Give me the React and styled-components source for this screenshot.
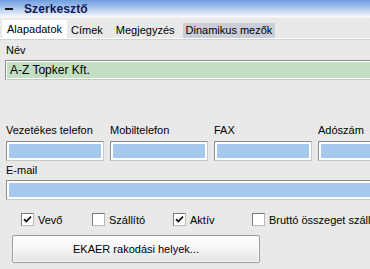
import React from 'react';
import styled, { createGlobalStyle } from 'styled-components';

const Global = createGlobalStyle`
  html, body { margin: 0; padding: 0; background: #e9e9e9; }
  body { font-family: "Liberation Sans", Arial, sans-serif; font-size: 11px; color: #000; }
`;

const Window = styled.div`
  width: 370px;
  height: 269px;
  overflow: hidden;
  background: #e9e9e9;
`;

const TitleBar = styled.div`
  height: 17px;
  display: flex;
  align-items: center;
  background: linear-gradient(to bottom, #6f9de0 0%, #a9c5ee 45%, #e3ecf9 85%, #f6f8fc 100%);
  border-bottom: 1px solid #f4f4f4;
`;

const Collapse = styled.span`
  width: 8px;
  height: 2px;
  background: #1a1a1a;
  margin: 0 11px 0 5px;
`;

const Title = styled.span`
  font-weight: bold;
  font-size: 12px;
  color: #0c1a5c;
  letter-spacing: 0.1px;
`;

const Tabs = styled.div`
  display: flex;
  align-items: flex-end;
  height: 18px;
  margin-top: 2px;
  padding-left: 2px;
  border-bottom: 1px solid #ffffff;
  box-shadow: 0 1px 0 #d2d2d2;
`;

const Tab = styled.div`
  height: ${p => (p.$active ? '18px' : '15px')};
  line-height: ${p => (p.$active ? '18px' : '15px')};
  padding: 0 ${p => p.$pad || 4}px;
  margin-right: ${p => p.$gap || 0}px;
  background: ${p => (p.$active ? '#ffffff' : p.$hover ? '#c9ced8' : 'transparent')};
  white-space: nowrap;
`;

const Body = styled.div`
  padding: 5px 0 0 6px;
`;

const Label = styled.div`
  height: 13px;
  line-height: 13px;
  white-space: nowrap;
`;

const Input = styled.div`
  box-sizing: border-box;
  height: 20px;
  width: ${p => p.$w || '420px'};
  border: 1px solid;
  border-color: #8d8d8d #c8c8c8 #c8c8c8 #8d8d8d;
  box-shadow: inset 0 0 0 ${p => (p.$green ? 1 : 2)}px #ffffff;
  background: ${p => (p.$green ? '#c2dfc2' : '#a6c8ef')};
  padding: 0 4px;
  line-height: 18px;
  white-space: nowrap;
  font-size: 12px;
`;

const Field = styled.div`
  margin-top: ${p => p.$top || 0}px;
  margin-left: ${p => p.$left || 0}px;
`;

const Grid = styled.div`
  display: grid;
  grid-template-columns: repeat(4, 98px);
  column-gap: 6px;
  margin-top: 44px;
`;

const Checks = styled.div`
  display: grid;
  grid-template-columns: 71px 81px 79px auto;
  padding-left: 15px;
  margin-top: 13px;
`;

const Check = styled.label`
  display: flex;
  align-items: center;
  gap: 4px;
  white-space: nowrap;
  font-size: 11px;
`;

const Box = styled.span`
  box-sizing: border-box;
  width: 13px;
  height: 13px;
  border: 1px solid #7f7f7f;
  border-color: #7a7a7a #b8b8b8 #b8b8b8 #7a7a7a;
  background: #ffffff;
  display: flex;
  align-items: center;
  justify-content: center;
`;

const Button = styled.div`
  box-sizing: border-box;
  width: 248px;
  height: 28px;
  margin: 9px 0 0 6px;
  border: 1px solid #9c9c9c;
  border-radius: 2px;
  background: linear-gradient(to bottom, #ffffff 0%, #f4f4f4 50%, #e3e3e3 100%);
  box-shadow: inset 0 0 0 1px #fafafa;
  display: flex;
  align-items: center;
  justify-content: center;
  font-size: 11px;
`;

const Tick = () => (
  <svg width="9" height="9" viewBox="0 0 9 9">
    <path d="M1 4.2 L3.3 6.5 L8 1.6" fill="none" stroke="#111" strokeWidth="1.8" />
  </svg>
);

const CheckItem = ({ checked, children }) => (
  <Check>
    <Box>{checked && <Tick />}</Box>
    {children}
  </Check>
);

const phones = ['Vezetékes telefon', 'Mobiltelefon', 'FAX', 'Adószám'];

export default function App() {
  return (
    <Window>
      <Global />
      <TitleBar>
        <Collapse />
        <Title>Szerkesztő</Title>
      </TitleBar>
      <Tabs>
        <Tab $active $pad={5}>Alapadatok</Tab>
        <Tab $gap={5}>Címek</Tab>
        <Tab $gap={4}>Megjegyzés</Tab>
        <Tab $hover $pad={3}>Dinamikus mezők</Tab>
      </Tabs>
      <Body>
        <Label>Név</Label>
        <Field $top={3} $left={-1}>
          <Input $green>A-Z Topker Kft.</Input>
        </Field>
        <Grid>
          {phones.map(p => (
            <div key={p}>
              <Label>{p}</Label>
              <Field $top={4}>
                <Input $w="98px" />
              </Field>
            </div>
          ))}
        </Grid>
        <Field $top={3}>
          <Label>E-mail</Label>
        </Field>
        <Field $top={3}>
          <Input />
        </Field>
        <Checks>
          <CheckItem checked>Vevő</CheckItem>
          <CheckItem>Szállító</CheckItem>
          <CheckItem checked>Aktív</CheckItem>
          <CheckItem>Bruttó összeget szállítólevélen</CheckItem>
        </Checks>
        <Button>EKAER rakodási helyek...</Button>
      </Body>
    </Window>
  );
}
